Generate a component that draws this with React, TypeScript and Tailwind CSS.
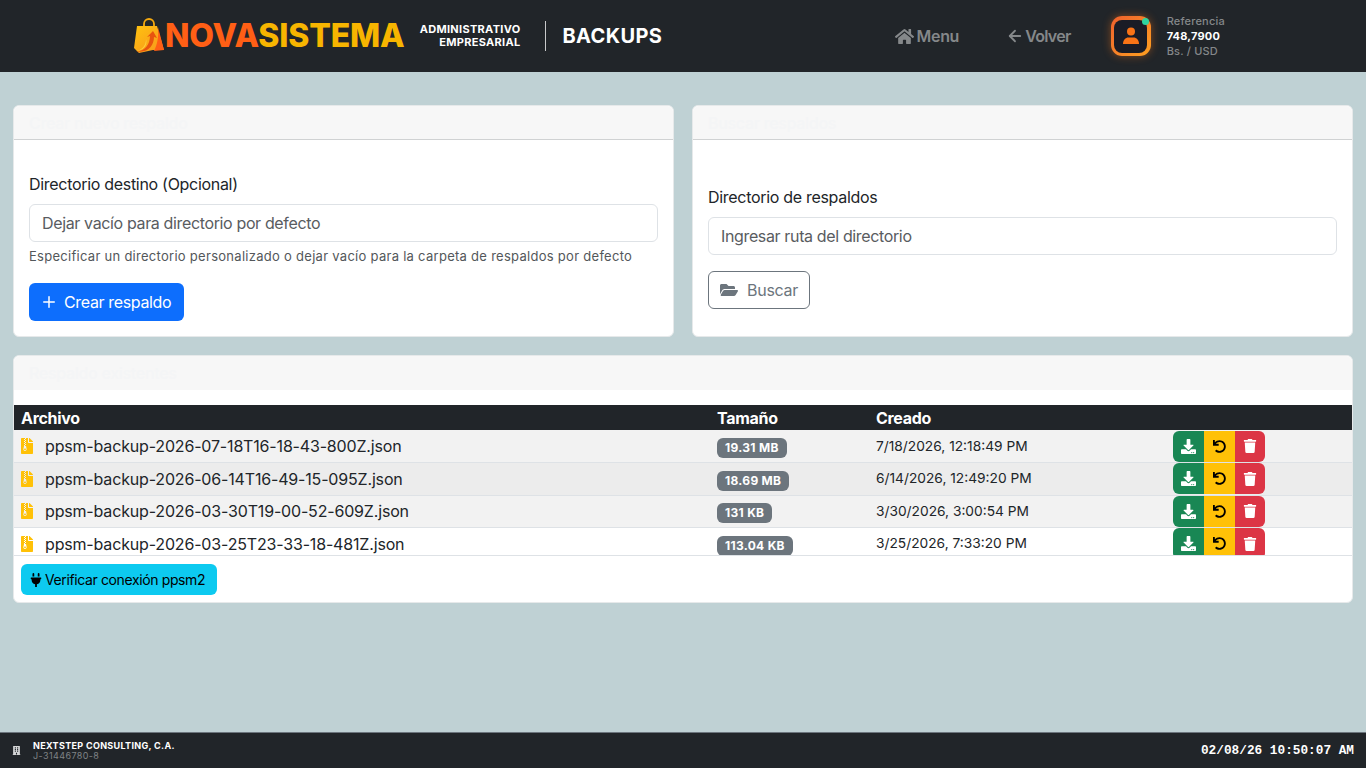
import { ArrowLeft, Plus } from "lucide-react";
import { FaBuilding, FaDownload, FaFileArchive, FaFolderOpen, FaHome, FaPlug, FaTrash, FaUndo } from "react-icons/fa";

const backups = [
  { file: "ppsm-backup-2026-07-18T16-18-43-800Z.json", size: "19.31 MB", date: "7/18/2026, 12:18:49 PM", bg: "bg-[#f2f2f2]" },
  { file: "ppsm-backup-2026-06-14T16-49-15-095Z.json", size: "18.69 MB", date: "6/14/2026, 12:49:20 PM", bg: "bg-[#ececec]" },
  { file: "ppsm-backup-2026-03-30T19-00-52-609Z.json", size: "131 KB", date: "3/30/2026, 3:00:54 PM", bg: "bg-[#f2f2f2]" },
  { file: "ppsm-backup-2026-03-25T23-33-18-481Z.json", size: "113.04 KB", date: "3/25/2026, 7:33:20 PM", bg: "bg-white" },
];

function BagLogo() {
  return (
    <svg width="32" height="36" viewBox="0 0 32 36" className="shrink-0">
      <defs>
        <linearGradient id="bag" x1="0" y1="0" x2="1" y2="1">
          <stop offset="0" stopColor="#ffc30f" />
          <stop offset="1" stopColor="#f7931e" />
        </linearGradient>
      </defs>
      <path d="M11 9V6a5 5 0 0 1 10 0v3" fill="none" stroke="#f5a90f" strokeWidth="1.8" />
      <path d="M4 8h20l7 24-11 0L6 35 1 30z" fill="url(#bag)" />
      <path d="M25 9l6 23-10 1c3-6 5-14 4-24z" fill="#ff5f15" />
      <path d="M3 33c8 1 14-6 14-15l-3 1 6-6 4 7-3-1c0 9-7 17-18 14z" fill="#e8540f" />
      <path d="M3 33c6-1 10-5 10-12 2 6-3 12-10 12z" fill="#ffd23f" />
    </svg>
  );
}

function CardHeader({ title, border = true }: { title: string; border?: boolean }) {
  return (
    <div className={`h-[34px] px-[15px] flex items-center bg-[#f7f7f7] rounded-t-md ${border ? "border-b border-[#d0d2d3]" : ""}`}>
      <h2 className="text-base font-medium tracking-[-0.3px] text-[#f4f5f6]">{title}</h2>
    </div>
  );
}

export default function App() {
  return (
    <div className="h-screen flex flex-col bg-[#bfd1d4] overflow-hidden font-['Inter',sans-serif] text-[#212529]">
      <header className="h-[72px] shrink-0 bg-[#212529] flex items-center pl-[133px]">
        <BagLogo />
        <span className="ml-0 text-[32px] leading-none font-extrabold tracking-[-0.15px] whitespace-nowrap">
          <span className="text-[#ff5f15]">NOVA</span>
          <span className="text-[#f7b500]">SISTEMA</span>
        </span>
        <div className="ml-[15px] w-[101px] text-right text-[11px] leading-[13px] font-bold tracking-[0.3px] text-white whitespace-nowrap">
          <div>ADMINISTRATIVO</div>
          <div>EMPRESARIAL</div>
        </div>
        <div className="ml-[24px] w-px h-[30px] bg-[#c8c9ca]" />
        <div className="ml-[17px] w-[100px] text-[20px] font-bold tracking-[0.35px] text-white whitespace-nowrap">BACKUPS</div>
        <div className="ml-[232px] flex items-center gap-[3px] text-[#85888a] font-semibold text-base tracking-[-0.3px]">
          <FaHome size={19} />
          <span>Menu</span>
        </div>
        <div className="ml-[47px] flex items-center gap-[1px] text-[#85888a] font-semibold text-base tracking-[-0.7px]">
          <ArrowLeft size={18} strokeWidth={2.4} />
          <span>Volver</span>
        </div>
        <div className="ml-[40px] relative w-[40px] h-[40px] rounded-[11px] p-[3.5px] bg-gradient-to-br from-[#ee5f2c] to-[#ffa01f] shadow-[0_0_8px_rgba(249,115,22,0.45)]">
          <div className="w-full h-full rounded-[8px] bg-[#1a1c26] flex items-center justify-center">
            <svg width="18" height="18" viewBox="0 0 18 18" fill="#f97316">
              <circle cx="9" cy="4.5" r="4" />
              <path d="M1 17c0-4 2.5-6.500 5.500-6.500h5c3 0 5.500 2.500 5.500 6.500z" />
            </svg>
          </div>
          <span className="absolute top-[2px] right-[2px] w-[7px] h-[7px] rounded-full bg-[#2dd4a0]" />
        </div>
        <div className="ml-[16px] text-[11px] leading-[15px] font-medium tracking-[0.2px] text-[#85888a]">
          <div>Referencia</div>
          <div className="font-bold text-white">748,7900</div>
          <div>Bs. / USD</div>
        </div>
      </header>

      <main className="flex-1 px-[13px] pt-[33px] flex flex-col gap-[18px]">
        <div className="grid grid-cols-2 gap-[18px]">
          <section className="h-[232px] bg-white rounded-md border border-[#e6e9ea]">
            <CardHeader title="Crear nuevo respaldo" />
            <div className="px-[15px] pt-[32px]">
              <label className="block text-base leading-6 mb-2 tracking-[-0.3px]">Directorio destino (Opcional)</label>
              <input
                readOnly
                placeholder="Dejar vacío para directorio por defecto"
                className="w-full h-[38px] px-3 text-base tracking-[-0.36px] border border-[#dee2e6] rounded-md outline-none placeholder:text-[#595c5f]"
              />
              <p className="mt-1 text-[13px] leading-[21px] text-[#53575a] tracking-[0.28px] whitespace-nowrap">
                Especificar un directorio personalizado o dejar vacío para la carpeta de respaldos por defecto
              </p>
              <button className="mt-4 h-[38px] w-[155px] rounded-md bg-[#0d6efd] text-white text-base tracking-[-0.35px] flex items-center pl-[11px] gap-[6px]">
                <Plus size={18} strokeWidth={2} />
                Crear respaldo
              </button>
            </div>
          </section>

          <section className="h-[232px] bg-white rounded-md border border-[#e6e9ea]">
            <CardHeader title="Buscar respaldos" />
            <div className="px-[15px] pt-[45px]">
              <label className="block text-base leading-6 mb-2 tracking-[-0.3px]">Directorio de respaldos</label>
              <input
                readOnly
                placeholder="Ingresar ruta del directorio"
                className="w-full h-[38px] px-3 text-base tracking-[-0.36px] border border-[#dee2e6] rounded-md outline-none placeholder:text-[#595c5f]"
              />
              <button className="mt-4 h-[38px] w-[102px] rounded-md border border-[#6c757d] text-[#6c757d] text-base tracking-[-0.3px] flex items-center justify-center gap-[9px]">
                <FaFolderOpen size={18} />
                Buscar
              </button>
            </div>
          </section>
        </div>

        <section className="h-[248px] bg-white rounded-md border border-[#e6e9ea]">
          <CardHeader title="Respaldo existentes" border={false} />
          <div className="mt-[15px] h-[151px] overflow-hidden border-b border-[#dee2e6]">
            <table className="w-full table-fixed border-collapse">
              <colgroup>
                <col className="w-[696px]" />
                <col className="w-[159px]" />
                <col className="w-[297px]" />
                <col />
              </colgroup>
              <thead>
                <tr className="h-[25px] bg-[#212529] text-white text-base font-bold text-left tracking-[-0.3px]">
                  <th className="pl-[7px] pr-2">Archivo</th>
                  <th className="pl-[7px] pr-2">Tamaño</th>
                  <th className="pl-[7px] pr-2">Creado</th>
                  <th />
                </tr>
              </thead>
              <tbody>
                {backups.map((b) => (
                  <tr key={b.file} className={`h-[32.5px] border-b border-[#dee2e6] ${b.bg}`}>
                    <td className="pl-[7px] pr-2 text-base tracking-[-0.17px]">
                      <span className="flex items-center">
                        <FaFileArchive size={16} className="text-[#ffc107] w-[12px] mr-[12px]" />
                        {b.file}
                      </span>
                    </td>
                    <td className="pl-[7px] pr-2">
                      <span className="inline-block rounded-md bg-[#6c757d] text-white text-xs font-bold px-2 py-1 leading-3 mt-[2px] tracking-[0.3px]">
                        {b.size}
                      </span>
                    </td>
                    <td className="pl-[7px] pr-2 text-[13.75px]">{b.date}</td>
                    <td className="pl-[7px] pr-2 py-0">
                      <div className="flex h-[31px] w-[92px] rounded-md overflow-hidden">
                        <button className="w-[31px] bg-[#198754] text-white flex items-center justify-center">
                          <FaDownload size={15} />
                        </button>
                        <button className="w-[31px] bg-[#ffc107] text-black flex items-center justify-center">
                          <FaUndo size={13} />
                        </button>
                        <button className="w-[30px] bg-[#dc3545] text-white flex items-center justify-center">
                          <FaTrash size={14} />
                        </button>
                      </div>
                    </td>
                  </tr>
                ))}
              </tbody>
            </table>
          </div>
          <div className="px-[7px] pt-2">
            <button className="h-[31px] w-[196px] rounded-md bg-[#0dcaf0] text-black text-sm tracking-[-0.38px] flex items-center pl-[8px] gap-[2px]">
              <FaPlug size={14} />
              Verificar conexión ppsm2
            </button>
          </div>
        </section>
      </main>

      <footer className="h-[36px] shrink-0 bg-[#212529] border-t border-[#6c757d] flex items-center justify-between pl-[12px] pr-[12px]">
        <div className="flex items-center gap-[12px]">
          <FaBuilding size={9} className="text-[#d5d6d7]" />
          <div className="text-[9px] leading-[10px]">
            <div className="font-bold tracking-[0.33px] text-white">NEXTSTEP CONSULTING, C.A.</div>
            <div className="tracking-[0.4px] text-[#7f8386]">J-31446780-8</div>
          </div>
        </div>
        <div className="font-['Liberation_Mono',monospace] text-[12.75px] font-bold text-white pt-[1px]">02/08/26 10:50:07 AM</div>
      </footer>
    </div>
  );
}
